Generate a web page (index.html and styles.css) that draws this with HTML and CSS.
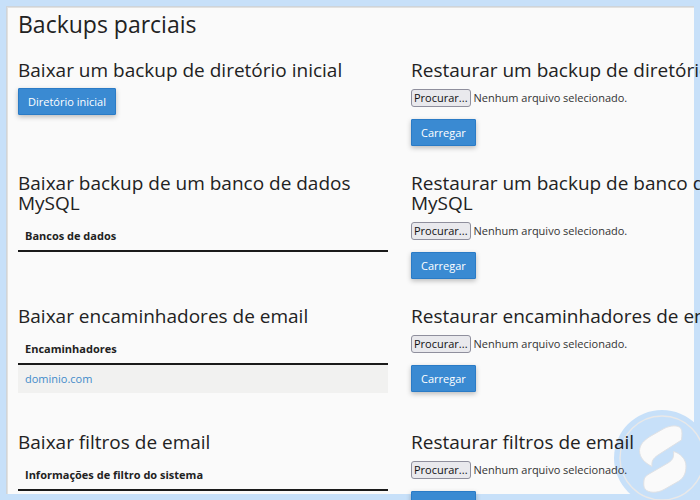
FILE: index.html
```html
<!DOCTYPE html>
<html lang="pt-BR">
<head>
<meta charset="utf-8">
<title>Backups parciais</title>
<link rel="stylesheet" href="styles.css">
</head>
<body>
<main class="page">
  <div class="panel" aria-hidden="true"></div>
  <svg class="watermark" viewBox="0 0 96 96" aria-hidden="true">
    <circle cx="48" cy="48" r="48" fill="#c7e0f9"/>
    <circle cx="48" cy="48" r="42" fill="none" stroke="#e9e8e8" stroke-width="1.4"/>
    <g fill="#fafafa" stroke="#dfe1e5" stroke-width="1">
      <path d="M38 56.500C31 53 25.500 48 25.500 40.500C26 34 30 30.500 36 26.500L50 18.500C56 15.500 64 14.500 67 18.500C68.500 21 68 26 67.500 30L44 45C39 48.500 37.500 51 38 56.500Z"/>
      <path d="M59.500 41.500C66 43 72 49 72 56C72 63 70 67.500 65 71L50 79.500C43 83.500 34 83 31 79C29.500 77 29.500 74 30 70C30.500 67 32 66 35 64L54 53C59 50 60 47 59.500 41.500Z"/>
    </g>
  </svg>
  <h1 class="title">Backups parciais</h1>
  <div class="sections">
    <section class="block">
      <h2 class="heading">Baixar um backup de diretório inicial</h2>
      <button class="button" type="button">Diretório inicial</button>
    </section>
    <form class="block">
      <h2 class="heading">Restaurar um backup de diretório inicial</h2>
      <label class="file"><input class="file-input" type="file"><span class="file-button">Procurar...</span><span>Nenhum arquivo selecionado.</span></label>
      <button class="button" type="button">Carregar</button>
    </form>

    <section class="block">
      <h2 class="heading">Baixar backup de um banco de dados MySQL</h2>
      <table class="table">
        <thead><tr><th scope="col">Bancos de dados</th></tr></thead>
      </table>
    </section>
    <form class="block">
      <h2 class="heading">Restaurar um backup de banco de dados MySQL</h2>
      <label class="file"><input class="file-input" type="file"><span class="file-button">Procurar...</span><span>Nenhum arquivo selecionado.</span></label>
      <button class="button" type="button">Carregar</button>
    </form>

    <section class="block">
      <h2 class="heading">Baixar encaminhadores de email</h2>
      <table class="table">
        <thead><tr><th scope="col">Encaminhadores</th></tr></thead>
        <tbody><tr><td><a class="link" href="#">dominio.com</a></td></tr></tbody>
      </table>
    </section>
    <form class="block">
      <h2 class="heading">Restaurar encaminhadores de email</h2>
      <label class="file"><input class="file-input" type="file"><span class="file-button">Procurar...</span><span>Nenhum arquivo selecionado.</span></label>
      <button class="button" type="button">Carregar</button>
    </form>

    <section class="block">
      <h2 class="heading">Baixar filtros de email</h2>
      <table class="table">
        <thead><tr><th scope="col">Informações de filtro do sistema</th></tr></thead>
      </table>
    </section>
    <form class="block">
      <h2 class="heading">Restaurar filtros de email</h2>
      <label class="file"><input class="file-input" type="file"><span class="file-button">Procurar...</span><span>Nenhum arquivo selecionado.</span></label>
      <button class="button" type="button">Carregar</button>
    </form>
  </div>
</main>
</body>
</html>
```
FILE: styles.css
```css
* {
  box-sizing: border-box;
}

body {
  margin: 0;
  background: #c7e0f9;
  color: #333;
  font: 11px/18px "Open Sans", "Noto Sans", sans-serif;
}

.page {
  position: relative;
  isolation: isolate;
  height: 100vh;
  overflow: hidden;
  padding: 10px 18px;
}

.panel {
  position: absolute;
  z-index: -2;
  inset: 6px;
  border-top: 1px solid #ced4da;
  border-left: 1px solid #ced4da;
  background: #fafafa;
  box-shadow: inset 1px 1px 0 #e2e1df;
}

.watermark {
  position: absolute;
  z-index: -1;
  right: -10px;
  bottom: -6px;
  width: 96px;
  height: 96px;
}

.title {
  margin: 0 0 22px;
  color: #222;
  font-size: 23px;
  font-weight: 400;
  line-height: 28px;
}

.sections {
  display: grid;
  grid-template-columns: repeat(2, minmax(370px, 1fr));
  gap: 27px 23px;
}

.heading {
  margin: 0 0 8px;
  color: #222;
  font-size: 19px;
  font-weight: 400;
  line-height: 20px;
}

.button {
  display: block;
  height: 27px;
  padding: 0 9px;
  border: 1px solid #2a7bc6;
  border-radius: 1px;
  background: #3a8ad2;
  box-shadow: 0 2px 5px rgba(0, 0, 0, 0.25);
  color: #fff;
  font: inherit;
}

.file {
  position: relative;
  display: flex;
  align-items: center;
  gap: 3px;
  width: max-content;
  margin-bottom: 12px;
  padding-top: 1px;
}

.file-input {
  position: absolute;
  inset: 0;
  width: 100%;
  opacity: 0;
}

.file-button {
  padding: 0 2px;
  border: 1px solid #8f8f9d;
  border-radius: 3px;
  background: #e9e9ed;
  color: #111;
  line-height: 16px;
}

.table {
  width: 100%;
  margin-bottom: 12px;
  border-collapse: collapse;
}

.table th,
.table td {
  padding: 5px 7px;
  text-align: left;
}

.table th {
  padding-top: 6px;
  border-bottom: 2px solid #1a1a1a;
  color: #222;
  font-weight: 700;
}

.table td {
  background: #f1f1f0;
}

.link {
  color: #428bca;
  text-decoration: none;
}
```
